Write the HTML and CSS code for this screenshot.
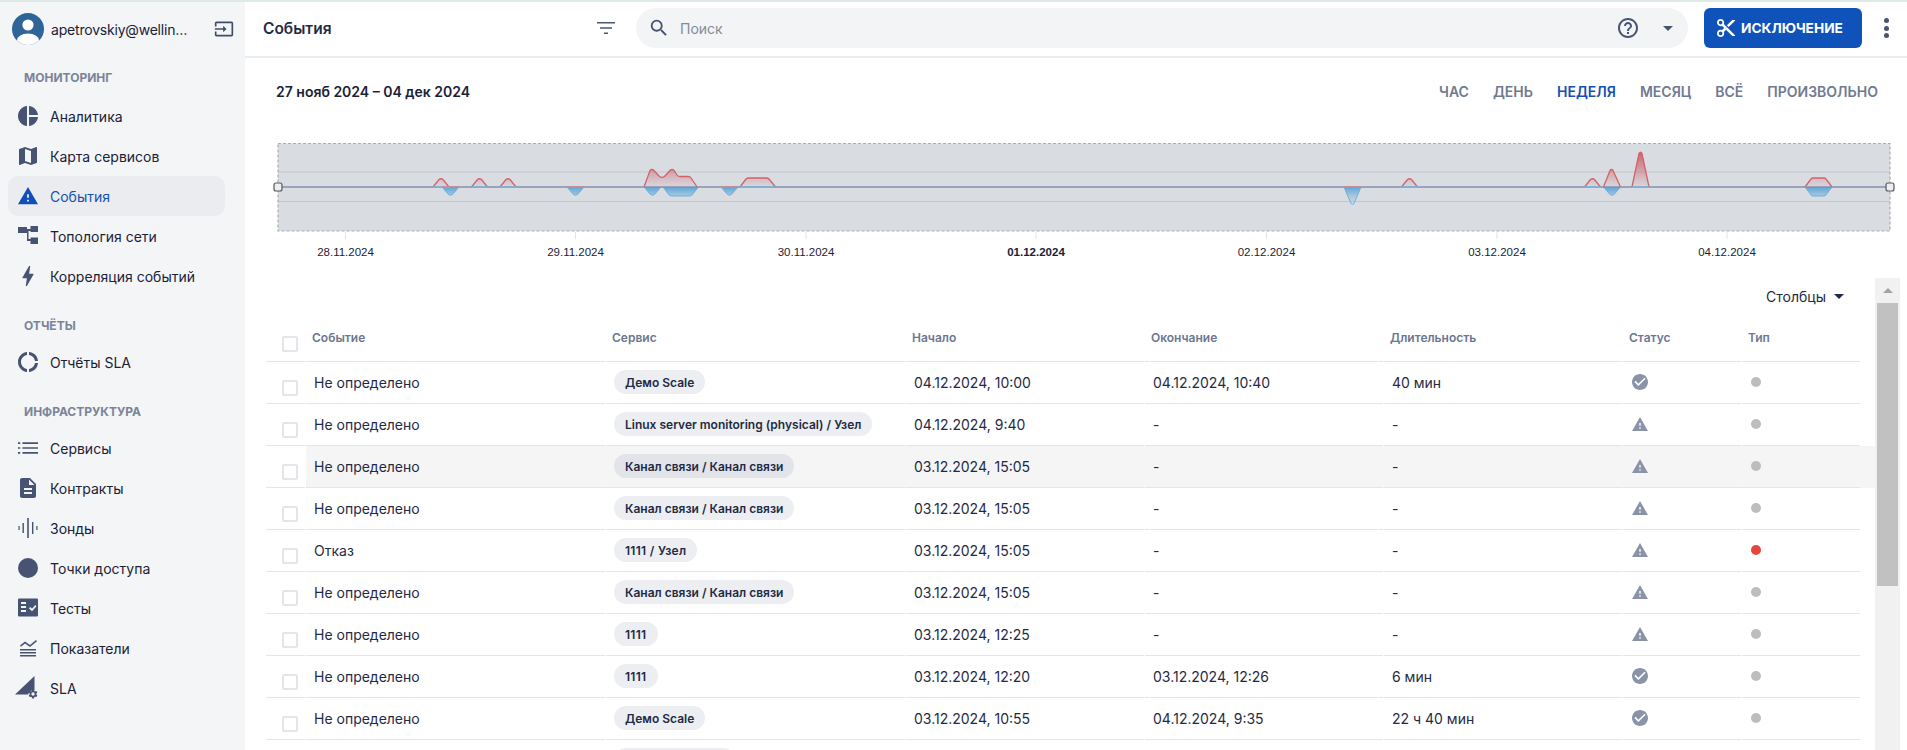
FILE: index.html
```html
<!DOCTYPE html>
<html lang="ru">
<head>
<meta charset="utf-8">
<title>События</title>
<link rel="stylesheet" href="styles.css">
</head>
<body>
<svg class="defs" width="0" height="0">
  <defs>
    <path id="i-ok" d="M12 2C6.480 2 2 6.480 2 12s4.480 10 10 10 10-4.480 10-10S17.520 2 12 2zm-2 15l-5-5 1.410-1.410L10 14.170l7.590-7.590L19 8l-9 9z"/>
    <path id="i-warn" d="M1 21h22L12 2 1 21zm12-3h-2v-2h2v2zm0-4h-2v-4h2v4z"/>
  </defs>
</svg>
<div class="strip"></div>
<div class="app">
  <aside class="sidebar">
    <div class="user">
      <svg class="avatar" viewBox="0 0 32 32"><defs><clipPath id="av"><circle cx="16" cy="16" r="16"/></clipPath></defs><circle cx="16" cy="16" r="16" fill="#2f6499"/><g clip-path="url(#av)" fill="#fff"><circle cx="16" cy="12" r="5.6"/><ellipse cx="16" cy="27.5" rx="11" ry="7"/></g></svg>
      <span class="user-name">apetrovskiy@wellink.ru</span>
      <svg class="exit" viewBox="0 0 24 24"><path d="M21 3.010H3c-1.100 0-2 .9-2 2V9h2V4.990h18v14.030H3V15H1v4.010c0 1.100.9 1.980 2 1.980h18c1.100 0 2-.88 2-1.980v-14a2 2 0 00-2-2zM11 16l4-4-4-4v3H1v2h10v3z"/></svg>
    </div>
    <div class="sec-title first">МОНИТОРИНГ</div>
    <a class="item"><svg viewBox="2 2 20 20"><path d="M11 2v20c-5.070-.5-9-4.790-9-10s3.930-9.500 9-10zm2.030 0v8.990H22c-.47-4.740-4.240-8.520-8.970-8.990zm0 11.010V22c4.740-.47 8.500-4.250 8.970-8.990h-8.970z"/></svg><span>Аналитика</span></a>
    <a class="item"><svg viewBox="2 2 20 20"><path d="M20.500 3l-.16.03L15 5.100 9 3 3.360 4.900c-.21.07-.36.25-.36.48V20.500c0 .28.22.5.5.5l.16-.03L9 18.900l6 2.100 5.640-1.900c.21-.07.36-.25.36-.48V3.500c0-.28-.22-.5-.5-.5zM15 19l-6-2.110V5l6 2.110V19z"/></svg><span>Карта сервисов</span></a>
    <a class="item active"><svg viewBox="1 1 22 22"><path d="M1 21h22L12 2 1 21zm12-3h-2v-2h2v2zm0-4h-2v-4h2v4z"/></svg><span>События</span></a>
    <a class="item"><svg viewBox="0 0 20 20"><path d="M0 1h9v6H0zM12.500 0H20v6h-7.500zM12.500 11.500H20V18h-7.500zM9 3h3.500v2H10.500v8H12.500v2H9z"/></svg><span>Топология сети</span></a>
    <a class="item"><svg viewBox="2 2 20 20"><path d="M11 21h-1l1-7H7.500c-.58 0-.57-.32-.38-.66.19-.34.05-.08.07-.12C8.480 10.940 10.420 7.540 13 3h1l-1 7h3.500c.49 0 .56.33.47.51l-.07.15C12.960 17.550 11 21 11 21z" transform="translate(12 12) scale(1.12) translate(-12 -12)"/></svg><span>Корреляция событий</span></a>
    <div class="sec-title">ОТЧЁТЫ</div>
    <a class="item"><svg viewBox="2 2 20 20"><path d="M11 5.080V2c-5 .5-9 4.810-9 10s4 9.500 9 10v-3.080c-3-.48-6-3.190-6-6.920s3-6.440 6-6.920zM18.970 11H22c-.47-5-4-8.530-9-9v3.080C16 5.510 18.540 8 18.970 11zM13 18.920V22c5-.47 8.530-4 9-9h-3.030c-.43 3-2.970 5.490-5.970 5.920z"/></svg><span>Отчёты SLA</span></a>
    <div class="sec-title">ИНФРАСТРУКТУРА</div>
    <a class="item"><svg viewBox="3 5 18 14"><path d="M3 11.300h2v1.400H3zm0 4.400h2v1.400H3zm0-8.800h2v1.400H3zm4 4.400h14v1.400H7zm0 4.400h14v1.400H7zm0-8.800h14v1.400H7z"/></svg><span>Сервисы</span></a>
    <a class="item"><svg viewBox="2 2 20 20"><path d="M14 2H6c-1.100 0-1.990.9-1.990 2L4 20c0 1.100.89 2 1.990 2H18c1.100 0 2-.9 2-2V8l-6-6zm2 16H8v-2h8v2zm0-4H8v-2h8v2zm-3-5V3.500L18.500 9H13z"/></svg><span>Контракты</span></a>
    <a class="item"><svg viewBox="0 0 20 20"><path d="M.5 8h1.200v4H.5zM4.500 5h1.400v10H4.500zM9.200 0h1.600v20H9.200zM14 4h1.400v12H14zM18.300 8h1.200v4h-1.200z"/></svg><span>Зонды</span></a>
    <a class="item"><svg viewBox="0 0 20 20"><circle cx="10" cy="10" r="10"/></svg><span>Точки доступа</span></a>
    <a class="item"><svg viewBox="0 0 20 20"><path fill-rule="evenodd" d="M1 .5h18a1 1 0 011 1v16a1 1 0 01-1 1H1a1 1 0 01-1-1v-16a1 1 0 011-1zM3 4v2h5V4zm0 4v2h5V8zm0 4v2h5v-2zm8-1.800l3 3 4.500-5-1.200-1.100-3.300 3.600-1.800-1.700z"/></svg><span>Тесты</span></a>
    <a class="item"><svg viewBox="0 0 20 20"><path d="M2 11v1.500h16V11zm0 3v1.500h16V14zm0 3v1.500h16V17zM2 7.500l5-4 5 3.500 6-5 1 1.200-7 5.800-5-3.500-4 3.200z"/></svg><span>Показатели</span></a>
    <a class="item"><svg class="wide" viewBox="0 0 24 24"><path d="M0 18.500L19.500 0v14a7 7 0 00-6.500 4.500z"/><g transform="translate(12.500 12.500) scale(.46)"><path d="M19.140 12.940c.04-.3.06-.61.06-.94s-.02-.64-.07-.94l2.030-1.580a.49.49 0 00.12-.61l-1.920-3.320a.49.49 0 00-.59-.22l-2.390.96c-.5-.38-1.030-.7-1.620-.94l-.36-2.540a.48.48 0 00-.48-.41h-3.840a.48.48 0 00-.47.41l-.36 2.540c-.59.24-1.130.57-1.620.94l-2.390-.96a.49.49 0 00-.59.22L2.740 8.870a.47.47 0 00.12.61l2.030 1.580c-.05.3-.09.63-.09.94s.02.64.07.94l-2.030 1.580a.49.49 0 00-.12.61l1.920 3.320c.12.22.37.29.59.22l2.390-.96c.5.38 1.030.7 1.620.94l.36 2.540c.05.24.24.41.48.41h3.840c.24 0 .44-.17.47-.41l.36-2.540c.59-.24 1.130-.56 1.620-.94l2.390.96c.22.08.47 0 .59-.22l1.920-3.320a.47.47 0 00-.12-.61l-2.010-1.580zM12 15.600a3.600 3.600 0 110-7.200 3.600 3.600 0 010 7.200z"/></g></svg><span>SLA</span></a>
  </aside>

  <main class="main">
    <header class="topbar">
      <h1 class="page-title">События</h1>
      <svg class="filter-ico" viewBox="3 6 18 12"><path d="M10 18h4v-1.500h-4zM3 6v1.500h18V6zm3 6.700h12v-1.500H6z"/></svg>
      <div class="search">
        <svg class="search-ico" viewBox="0 0 24 24"><path d="M15.500 14h-.79l-.28-.27A6.471 6.471 0 0016 9.500 6.500 6.500 0 109.500 16c1.610 0 3.090-.59 4.230-1.570l.27.28v.79l5 4.990L20.490 19l-4.990-5zm-6 0C7.010 14 5 11.990 5 9.500S7.010 5 9.500 5 14 7.010 14 9.500 11.990 14 9.500 14z"/></svg>
        <span class="placeholder">Поиск</span>
        <svg class="help-ico" viewBox="0 0 24 24"><path d="M11 18h2v-2h-2v2zm1-16C6.480 2 2 6.480 2 12s4.480 10 10 10 10-4.480 10-10S17.520 2 12 2zm0 18c-4.410 0-8-3.590-8-8s3.590-8 8-8 8 3.590 8 8-3.590 8-8 8zm0-14c-2.210 0-4 1.790-4 4h2c0-1.100.9-2 2-2s2 .9 2 2c0 2-3 1.750-3 5h2c0-2.250 3-2.500 3-5 0-2.210-1.790-4-4-4z"/></svg>
        <span class="caret search-caret"></span>
      </div>
      <button class="primary"><svg viewBox="2 2 20 20"><path d="M9.640 7.640c.23-.5.36-1.050.36-1.640 0-2.210-1.790-4-4-4S2 3.790 2 6s1.790 4 4 4c.59 0 1.140-.13 1.640-.36L10 12l-2.360 2.360C7.140 14.130 6.590 14 6 14c-2.210 0-4 1.790-4 4s1.790 4 4 4 4-1.790 4-4c0-.59-.13-1.140-.36-1.640L12 14l7 7h3v-1L9.640 7.640zM6 8c-1.100 0-2-.89-2-2s.9-2 2-2 2 .89 2 2-.9 2-2 2zm0 12c-1.100 0-2-.89-2-2s.9-2 2-2 2 .89 2 2-.9 2-2 2zm6-7.500c-.28 0-.5-.22-.5-.5s.22-.5.5-.5.5.22.5.5-.22.5-.5.5zM19 3l-6 6 2 2 7-7V3z"/></svg>ИСКЛЮЧЕНИЕ</button>
      <div class="dots"><i></i><i></i><i></i></div>
    </header>

    <div class="range-row">
      <div class="range">27 нояб 2024 – 04 дек 2024</div>
      <nav class="tabs"><a>ЧАС</a><a>ДЕНЬ</a><a class="on">НЕДЕЛЯ</a><a>МЕСЯЦ</a><a>ВСЁ</a><a>ПРОИЗВОЛЬНО</a></nav>
    </div>

    <svg class="chart" viewBox="270 138 1627 125">
      <defs>
        <linearGradient id="grs" gradientUnits="userSpaceOnUse" x1="0" y1="150" x2="0" y2="187"><stop offset="0" stop-color="#c9505c" stop-opacity=".9"/><stop offset="1" stop-color="#c9505c" stop-opacity=".03"/></linearGradient>
        <linearGradient id="gb" gradientUnits="userSpaceOnUse" x1="0" y1="187" x2="0" y2="205"><stop offset="0" stop-color="#5aa5d8"/><stop offset="1" stop-color="#a8c6de" stop-opacity=".15"/></linearGradient>
      </defs>
      <rect x="278" y="143.500" width="1612" height="87.500" fill="#d9dce1"/>
      <path d="M345.500 232v7M575.500 232v7M806 232v7M1036 232v7M1266.500 232v7M1497 232v7M1727 232v7" stroke="#e3e3e3"/>
      <path d="M278 172h1612M278 201.500h1612" stroke="#c3c6cc" stroke-width="1"/>
      <g fill="url(#grs)" stroke="#d5606a" stroke-width="1.300">
        <path d="M433 187l6-7.500q2-1.500 4 0l6 7.500"/>
        <path d="M471.500 187l6-7.500q2-1.500 4 0l6 7.500"/>
        <path d="M500 187l6-7.500q2-1.500 4 0l6 7.500"/>
        <path d="M644 187l6-16.500q2-2 4 0l5.500 6q2.500 1.800 5 0l5.500-6q2-2 4 0l3 4.500q1 1.500 3 1.500h8q2 0 3 1.500l6.500 9.500"/>
        <path d="M740 187l6-8q1-1 3-1h17q2 0 3 1l6.500 8"/>
        <path d="M1401.500 187l6-7.500q2-1.500 4 0l6 7.500"/>
        <path d="M1584.500 187l6-7.500q2-1.500 4 0l6 7.500"/>
        <path d="M1603.500 187l6.500-16.500q1.500-2 3 0l7.500 16.500"/>
        <path d="M1632 187l7-33.500q1.500-2.500 3 0l7 33.500"/>
        <path d="M1805 187l6-8q1-1 2-1h11q1 0 2 1l6 8"/>
      </g>
      <g fill="url(#gb)" stroke="#6fb0dd" stroke-width="1">
        <path d="M442 187l6.500 7.500q2 1.500 4 0l6.500-7.500"/>
        <path d="M567 187l6.500 7.500q2 1.500 4 0l6.500-7.500"/>
        <path d="M644 187l6.500 7.500q2 1.500 4 0l6.500-7.500"/>
        <path d="M663 187l6 8q1 1 3 1h17q2 0 3-1l6.500-8"/>
        <path d="M721 187l6.500 7.500q2 1.500 4 0l6.500-7.500"/>
        <path d="M1344 187l7 16.500q1.500 2 3 0l7-16.500"/>
        <path d="M1603.500 187l6.500 7.500q2 1.500 4 0l6.500-7.500"/>
        <path d="M1805 187l6 8q1 1 2 1h11q1 0 2-1l6-8"/>
      </g>
      <line x1="278" y1="187" x2="1890" y2="187" stroke="#8490ae" stroke-width="1.600"/>
      <path d="M433 187h16M471.500 187h16M500 187h16M740 187h35M1401.500 187h17M1584.500 187h16M1632 187h17" stroke="#7cb7e0" stroke-width="1.500"/>
      <path d="M567 187h17M721 187h17M1344 187h17M442 187h17" stroke="#d5868e" stroke-width="1.500"/>
      <rect x="278" y="143.500" width="1612" height="87.500" fill="none" stroke="#aaacb0" stroke-width="1.200" stroke-dasharray="3 2"/>
      <rect x="274" y="183" width="8" height="8" rx="2" fill="#eceded" stroke="#55585e" stroke-width="1.200"/>
      <rect x="1886" y="183" width="8" height="8" rx="2" fill="#eceded" stroke="#55585e" stroke-width="1.200"/>
      <g class="axis" text-anchor="middle">
        <text x="345.500" y="256">28.11.2024</text>
        <text x="575.500" y="256">29.11.2024</text>
        <text x="806" y="256">30.11.2024</text>
        <text x="1036" y="256" font-weight="700">01.12.2024</text>
        <text x="1266.500" y="256">02.12.2024</text>
        <text x="1497" y="256">03.12.2024</text>
        <text x="1727" y="256">04.12.2024</text>
      </g>
    </svg>

    <section class="lower">
      <div class="panel">
        <div class="tools"><span>Столбцы</span><span class="caret dark"></span></div>
        <table class="grid">
          <colgroup><col class="c-check"><col class="c-wide"><col class="c-wide"><col class="c-mid"><col class="c-mid"><col class="c-mid"><col class="c-small"><col class="c-small"><col class="c-gutter"></colgroup>
          <thead>
            <tr><th class="check"><i class="box"></i></th><th>Событие</th><th>Сервис</th><th>Начало</th><th>Окончание</th><th>Длительность</th><th>Статус</th><th>Тип</th><th class="gutter"></th></tr>
          </thead>
          <tbody>
            <tr><td class="check"><i class="box"></i></td><td>Не определено</td><td class="svc"><b class="chip">Демо Scale</b></td><td>04.12.2024, 10:00</td><td>04.12.2024, 10:40</td><td>40 мин</td><td class="st"><svg viewBox="2 2 20 20"><use href="#i-ok"/></svg></td><td class="ty"><i class="dot"></i></td><td class="gutter"></td></tr>
            <tr><td class="check"><i class="box"></i></td><td>Не определено</td><td class="svc"><b class="chip">Linux server monitoring (physical) / Узел</b></td><td>04.12.2024, 9:40</td><td>-</td><td>-</td><td class="st"><svg viewBox="1 2 22 19"><use href="#i-warn"/></svg></td><td class="ty"><i class="dot"></i></td><td class="gutter"></td></tr>
            <tr class="hover"><td class="check"><i class="box"></i></td><td>Не определено</td><td class="svc"><b class="chip">Канал связи / Канал связи</b></td><td>03.12.2024, 15:05</td><td>-</td><td>-</td><td class="st"><svg viewBox="1 2 22 19"><use href="#i-warn"/></svg></td><td class="ty"><i class="dot"></i></td><td class="gutter"></td></tr>
            <tr><td class="check"><i class="box"></i></td><td>Не определено</td><td class="svc"><b class="chip">Канал связи / Канал связи</b></td><td>03.12.2024, 15:05</td><td>-</td><td>-</td><td class="st"><svg viewBox="1 2 22 19"><use href="#i-warn"/></svg></td><td class="ty"><i class="dot"></i></td><td class="gutter"></td></tr>
            <tr><td class="check"><i class="box"></i></td><td>Отказ</td><td class="svc"><b class="chip num">1111 / Узел</b></td><td>03.12.2024, 15:05</td><td>-</td><td>-</td><td class="st"><svg viewBox="1 2 22 19"><use href="#i-warn"/></svg></td><td class="ty"><i class="dot red"></i></td><td class="gutter"></td></tr>
            <tr><td class="check"><i class="box"></i></td><td>Не определено</td><td class="svc"><b class="chip">Канал связи / Канал связи</b></td><td>03.12.2024, 15:05</td><td>-</td><td>-</td><td class="st"><svg viewBox="1 2 22 19"><use href="#i-warn"/></svg></td><td class="ty"><i class="dot"></i></td><td class="gutter"></td></tr>
            <tr><td class="check"><i class="box"></i></td><td>Не определено</td><td class="svc"><b class="chip num">1111</b></td><td>03.12.2024, 12:25</td><td>-</td><td>-</td><td class="st"><svg viewBox="1 2 22 19"><use href="#i-warn"/></svg></td><td class="ty"><i class="dot"></i></td><td class="gutter"></td></tr>
            <tr><td class="check"><i class="box"></i></td><td>Не определено</td><td class="svc"><b class="chip num">1111</b></td><td>03.12.2024, 12:20</td><td>03.12.2024, 12:26</td><td>6 мин</td><td class="st"><svg viewBox="2 2 20 20"><use href="#i-ok"/></svg></td><td class="ty"><i class="dot"></i></td><td class="gutter"></td></tr>
            <tr><td class="check"><i class="box"></i></td><td>Не определено</td><td class="svc"><b class="chip">Демо Scale</b></td><td>03.12.2024, 10:55</td><td>04.12.2024, 9:35</td><td>22 ч 40 мин</td><td class="st"><svg viewBox="2 2 20 20"><use href="#i-ok"/></svg></td><td class="ty"><i class="dot"></i></td><td class="gutter"></td></tr>
            <tr class="cut"><td></td><td></td><td class="svc"><b class="chip blank"></b></td><td></td><td></td><td></td><td></td><td></td><td class="gutter"></td></tr>
          </tbody>
        </table>
      </div>
      <div class="scroll"><div class="scroll-up"></div><div class="thumb"></div></div>
    </section>
  </main>
</div>
</body>
</html>
```

FILE: styles.css
```css
* { box-sizing: border-box; }
html, body { margin: 0; height: 100%; }
body {
  width: 1907px; height: 750px; overflow: hidden; background: #fff;
  font-family: Inter, "Noto Sans", sans-serif; font-size: 14px; color: #1f2a44;
}
a { text-decoration: none; color: inherit; }
.defs { display: block; height: 0; }
.strip { height: 2px; background: #dfe9e6; }
.app { display: flex; height: 748px; }

/* Sidebar */
.sidebar { flex: 0 0 245px; background: #f4f5f7; color: #1a2238; }
.user { height: 54px; display: flex; align-items: center; padding-left: 12px; }
.avatar { width: 32px; height: 32px; flex: none; }
.user-name { width: 139px; margin-left: 7px; overflow: hidden; white-space: nowrap; text-overflow: ellipsis; letter-spacing: -.2px; }
.exit { width: 20px; height: 20px; margin-left: 24px; fill: #3f4d6b; flex: none; }
.sec-title { margin: 22px 0 8px 24px; height: 16px; line-height: 16px; font-size: 12px; font-weight: 700; color: #7a8499; }
.sec-title.first { margin-top: 14px; margin-bottom: 10px; }
.item { display: flex; align-items: center; gap: 12px; height: 40px; width: 217px; margin-left: 8px; padding-left: 10px; border-radius: 10px; }
.item svg { width: 20px; height: 20px; fill: #475372; flex: none; }
.item svg.wide { width: 24px; height: 24px; margin: 0 -1px 0 -3px; }
.item.active { background: #ebecf0; color: #1351b4; }
.item.active svg { fill: #0f4fb8; }

/* Top bar */
.main { flex: 1; min-width: 0; }
.topbar { height: 56px; padding: 0 0 2px 18px; border-bottom: 2px solid #ebecf0; display: flex; align-items: center; }
.page-title { margin: 0; width: 334px; font-size: 15.500px; font-weight: 600; color: #1f2a44; }
.filter-ico { width: 18px; height: 12px; fill: #4b5672; flex: none; }
.search { flex: 1; height: 40px; margin-left: 21px; border-radius: 20px; background: #f3f4f6; display: flex; align-items: center; padding-left: 12px; }
.search-ico { width: 22px; height: 22px; fill: #475372; flex: none; }
.placeholder { margin-left: 10px; color: #858b96; flex: 1; }
.help-ico { width: 24px; height: 24px; fill: #475372; flex: none; }
.caret { width: 0; height: 0; border-left: 5px solid transparent; border-right: 5px solid transparent; border-top: 5px solid #475372; flex: none; }
.search-caret { margin: 0 15px 0 23px; }
.primary { flex: none; width: 158px; height: 40px; margin-left: 16px; border: 0; border-radius: 6px; background: #0f52ba; color: #fff; font: 700 13.700px Inter, sans-serif; display: flex; align-items: center; padding: 0 0 0 13px; gap: 6px; }
.primary svg { width: 18px; height: 18px; fill: #fff; flex: none; }
.dots { flex: 0 0 45px; display: flex; flex-direction: column; align-items: center; gap: 2.500px; padding-left: 3px; }
.dots i { width: 5px; height: 5px; border-radius: 50%; background: #475372; }

/* Range row */
.range-row { height: 66px; padding: 0 29px 0 31px; display: flex; align-items: center; justify-content: space-between; }
.range { font-weight: 600; font-size: 14px; color: #1a2238; }
.tabs { display: flex; gap: 24px; font-size: 14px; font-weight: 600; color: #707a90; }
.tabs a { white-space: nowrap; }
.tabs .on { color: #1351b4; }

/* Chart */
.chart { display: block; width: 1627px; height: 125px; margin: 14px 0 0 25px; overflow: visible; }
.axis { font: 11.500px "Liberation Sans", Arial, sans-serif; fill: #1a2238; }

/* Table area */
.lower { display: flex; margin: 15px 0 0 21px; height: 472px; }
.panel { width: 1609px; flex: none; overflow: hidden; }
.tools { height: 36px; display: flex; align-items: center; justify-content: flex-end; gap: 8px; padding-right: 31px; color: #1f2a44; font-size: 14px; }
.caret.dark { border-top-color: #1f2a44; }
.grid { width: 1609px; table-layout: fixed; border-collapse: separate; border-spacing: 0; }
.c-check { width: 40px; } .c-wide { width: 300px; } .c-mid { width: 239px; } .c-small { width: 119px; } .c-gutter { width: 14px; }
.grid th, .grid td {
  background-image: linear-gradient(#e3e5ea, #e3e5ea);
  background-size: calc(100% - 1px) 1px;
  background-position: left bottom;
  background-repeat: no-repeat;
}
.grid th { height: 48px; padding: 0 0 2px 6px; text-align: left; font-size: 12px; font-weight: 600; color: #6b7690; }
.grid td { height: 42px; padding: 0 0 2px 8px; white-space: nowrap; color: #1f2a44; }
.grid th.check { padding: 11px 0 0 16px; }
.grid td.check { padding: 9px 0 0 16px; }
.grid th.gutter, .grid td.gutter { background-image: none; padding: 0; }
.box { display: block; width: 16px; height: 16px; border: 2px solid #e3e5ea; border-radius: 2px; background: #fff; }
.chip { display: inline-block; height: 24px; line-height: 25px; padding: 0 11px; border-radius: 12px; background: #eceef2; font-size: 12px; font-weight: 600; vertical-align: middle; }
.chip.num { letter-spacing: .3px; }
.chip.blank { width: 122px; }
.grid td.st { padding-left: 9px; }
.grid td.ty { padding-left: 9px; }
.st svg { display: block; width: 16px; height: 16px; fill: #8a93a8; }
.dot { display: block; width: 10px; height: 10px; border-radius: 50%; background: #bdbdbd; }
.dot.red { background: #e8453c; }
.hover td { background-color: #f5f5f5; }
.hover td.check { background-color: #fff; }
.hover .chip { background: #e2e4ea; }

/* Scrollbar */
.scroll { flex: none; width: 25px; padding: 0 2px; background: #f1f1f1; display: flex; flex-direction: column; }
.scroll-up { height: 25px; display: flex; align-items: center; justify-content: center; }
.scroll-up::before { content: ""; border-left: 5px solid transparent; border-right: 5px solid transparent; border-bottom: 5px solid #a3a3a3; }
.thumb { height: 283px; background: #c1c1c1; }
```
